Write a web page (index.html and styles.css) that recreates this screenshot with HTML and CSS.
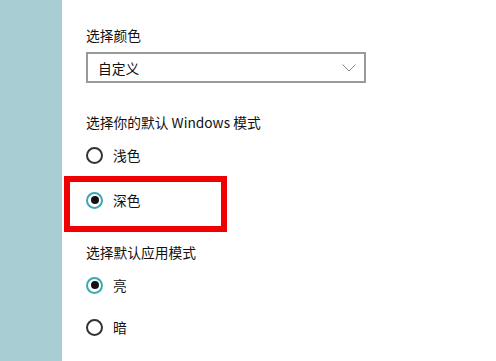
FILE: index.html
```html
<!DOCTYPE html>
<html lang="zh-CN">
<head>
<meta charset="utf-8">
<title>颜色</title>
<link rel="stylesheet" href="styles.css">
</head>
<body>
<div class="page">
  <aside class="side"></aside>
  <main class="main">
    <div class="label first">选择颜色</div>
    <div class="select">
      <span class="select-text">自定义</span>
      <svg class="chevron" width="14" height="8" viewBox="0 0 14 8"><polyline points="0.5,0.5 7,7 13.5,0.5" fill="none" stroke="#8a8a8a" stroke-width="1"/></svg>
    </div>
    <div class="label l2">选择你的默认 Windows 模式</div>
    <div class="radio r1"><span class="dot"></span><span>浅色</span></div>
    <div class="radio r2 checked"><span class="dot"></span><span>深色</span></div>
    <div class="label l3">选择默认应用模式</div>
    <div class="radio r3 checked"><span class="dot"></span><span>亮</span></div>
    <div class="radio r4"><span class="dot"></span><span>暗</span></div>
  </main>
</div>
<div class="highlight"></div>
</body>
</html>
```
FILE: styles.css
```css
html, body {
  margin: 0;
  padding: 0;
  background: #ffffff;
}
body {
  font-family: "Noto Sans CJK SC", "Noto Sans", sans-serif;
  font-size: 13.75px;
  color: #111;
  position: relative;
}
.page {
  display: flex;
  height: 361px;
  overflow: hidden;
}
.side {
  width: 62px;
  flex: 0 0 62px;
  background: #a8ced3;
}
.main {
  flex: 1;
  padding: 25px 0 0 24px;
  display: flex;
  flex-direction: column;
  align-items: flex-start;
}
.label {
  line-height: 20px;
  height: 20px;
}
.select {
  margin-top: 7px;
  box-sizing: border-box;
  width: 280px;
  height: 31px;
  border: 2px solid #999;
  display: flex;
  align-items: center;
  justify-content: space-between;
  padding: 0 8px 0 10px;
}
.select-text {
  line-height: 20px;
}
.chevron {
  display: block;
  margin-top: 1px;
}
.l2 { margin-top: 29px; }
.radio {
  display: flex;
  align-items: center;
  gap: 10px;
  height: 20px;
  line-height: 20px;
}
.r1 { margin-top: 13px; }
.r2 { margin-top: 25px; }
.l3 { margin-top: 32px; }
.r3 { margin-top: 13px; }
.r4 { margin-top: 22px; }
.dot {
  box-sizing: border-box;
  flex: 0 0 17px;
  width: 17px;
  height: 17px;
  border: 2px solid #333;
  border-radius: 50%;
  display: flex;
  align-items: center;
  justify-content: center;
}
.checked .dot {
  border-color: #3aa7b3;
}
.checked .dot::after {
  content: "";
  width: 8px;
  height: 8px;
  border-radius: 50%;
  background: #111;
}
.highlight {
  position: absolute;
  left: 64px;
  top: 176px;
  width: 163px;
  height: 56px;
  box-sizing: border-box;
  border: 6px solid #f00000;
}
```
